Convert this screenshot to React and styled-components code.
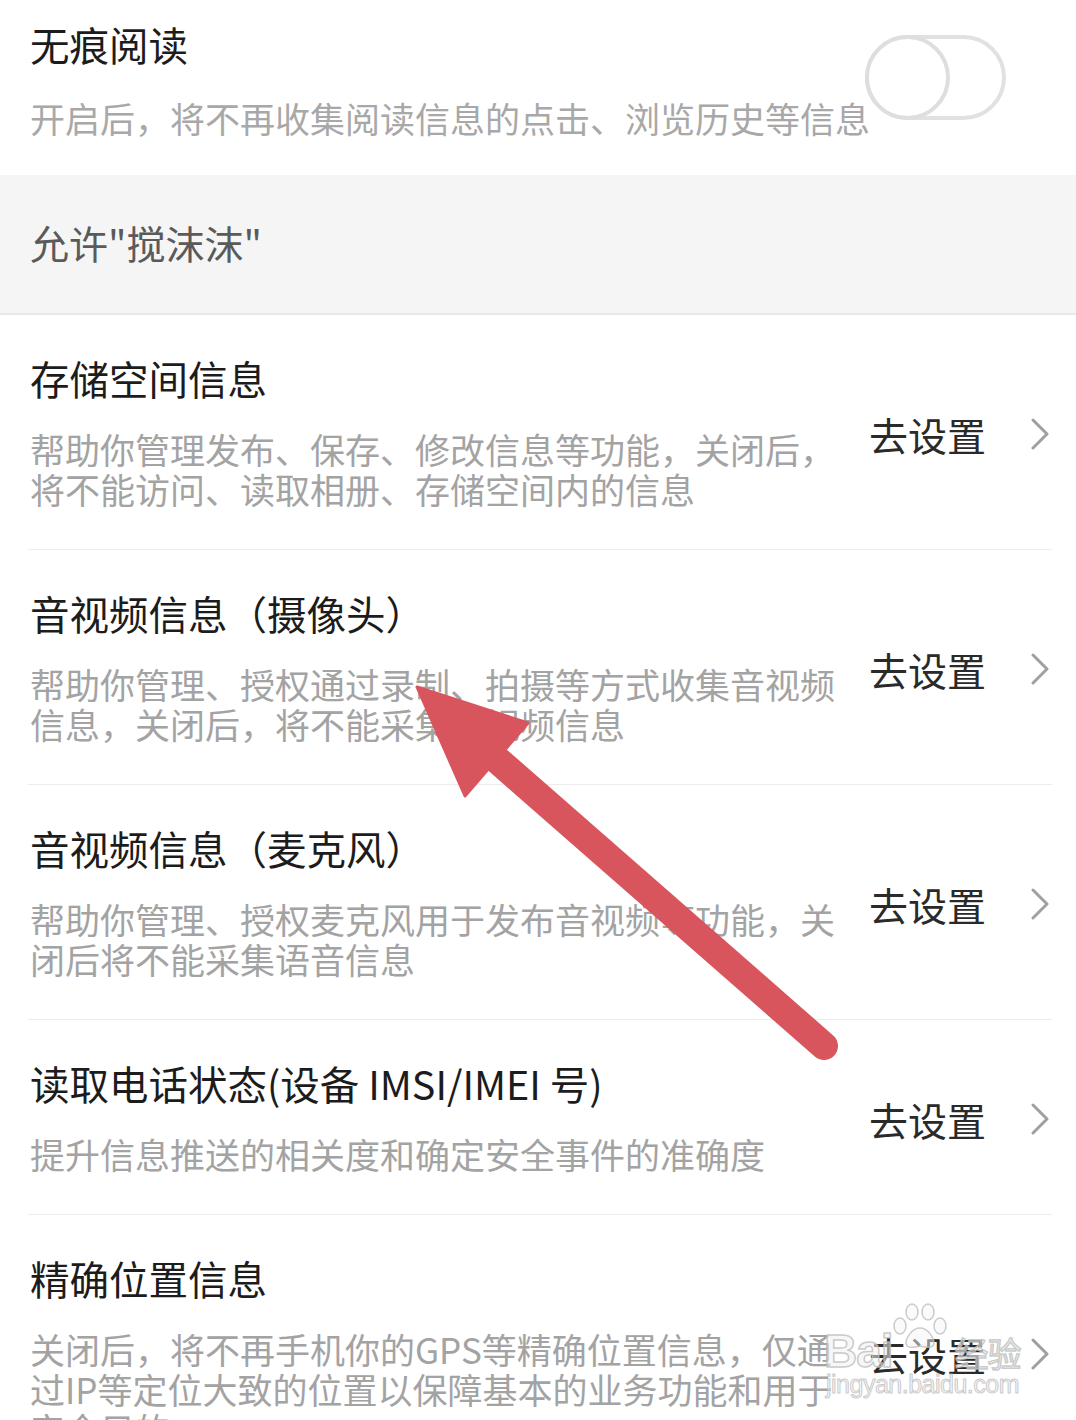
import React from "react";
import styled, { createGlobalStyle } from "styled-components";

const Global = createGlobalStyle`
  html, body { margin: 0; padding: 0; background: #fff; }
  body { font-family: "Noto Sans CJK SC", "Noto Sans", sans-serif; }
  * { box-sizing: border-box; }
`;

const Page = styled.div`
  position: relative;
  width: 1076px;
  height: 1420px;
  overflow: hidden;
  background: #fff;
`;

const Header = styled.div`
  display: flex;
  align-items: flex-start;
  height: 175px;
  padding: 20px 70px 0 30px;
`;

const HeaderText = styled.div`
  flex: 1;
  min-width: 0;
  display: flex;
  flex-direction: column;
  gap: 30px;
`;

const Title = styled.div`
  font-size: 39.5px;
  line-height: 48px;
  color: #1c1c1c;
  white-space: nowrap;
`;

const Desc = styled.div`
  font-size: 35px;
  line-height: 40px;
  color: ${(p) => p.$color || "#a3a3a3"};
  white-space: pre;
`;

const Toggle = styled.div`
  position: relative;
  flex: none;
  width: 141px;
  height: 85px;
  margin-top: 15px;
  margin-left: -10px;
  border: 4px solid #e1e1e1;
  border-radius: 43px;
  &::before {
    content: "";
    position: absolute;
    left: -4px;
    top: -4px;
    width: 85px;
    height: 85px;
    border: 4px solid #dedede;
    border-radius: 50%;
    background: #fff;
    box-sizing: border-box;
  }
`;

const Band = styled.div`
  display: flex;
  align-items: center;
  height: 140px;
  padding: 0 30px 4px;
  background: #f5f5f5;
  border-bottom: 2px solid #e8e8e8;
  font-size: 39px;
  color: #5a5a5a;
`;

const List = styled.div`
  padding: 0 24px 0 28px;
`;

const Row = styled.div`
  display: flex;
  align-items: center;
  padding: 39px 2px 40px 2px;
  border-bottom: 1px solid #ececec;
`;

const RowText = styled.div`
  flex: 1;
  min-width: 0;
  display: flex;
  flex-direction: column;
  gap: 27px;
`;

const Action = styled.div`
  flex: none;
  display: flex;
  align-items: center;
  gap: 44px;
  font-size: 39px;
  line-height: 48px;
  color: #2a2a2a;
  margin-top: 4px;
`;

const Chevron = () => (
  <svg width="20" height="32" viewBox="0 0 20 32">
    <path d="M3 2 L17 16 L3 30" fill="none" stroke="#a0a0a0" strokeWidth="3" strokeLinecap="round" strokeLinejoin="round" />
  </svg>
);

const Overlay = styled.svg`
  position: absolute;
  left: 0;
  top: 0;
  pointer-events: none;
`;

const Watermark = styled.div`
  position: absolute;
  left: 824px;
  top: 1300px;
  width: 200px;
  height: 104px;
  pointer-events: none;
  color: rgba(240, 240, 240, 0.55);
`;

const WmBig = styled.div`
  position: absolute;
  top: 28px;
  left: 0;
  display: flex;
  align-items: baseline;
  font-family: "Liberation Sans", Arial, sans-serif;
  font-size: 46px;
  font-weight: 700;
  line-height: 46px;
  -webkit-text-stroke: 1.5px rgba(190, 190, 190, 0.8);
  letter-spacing: -1px;
`;

const WmCn = styled.span`
  font-family: "Noto Sans CJK SC", sans-serif;
  font-size: 34px;
  margin-left: 62px;
  font-weight: 400;
`;

const WmUrl = styled.div`
  position: absolute;
  top: 70px;
  left: 2px;
  font-family: "Liberation Sans", Arial, sans-serif;
  font-size: 25px;
  line-height: 28px;
  -webkit-text-stroke: 1px rgba(190, 190, 190, 0.8);
  letter-spacing: -0.5px;
`;

const Paw = styled.svg`
  position: absolute;
  left: 66px;
  top: 2px;
`;

const rows = [
  {
    title: "存储空间信息",
    desc: "帮助你管理发布、保存、修改信息等功能，关闭后，\n将不能访问、读取相册、存储空间内的信息",
  },
  {
    title: "音视频信息（摄像头）",
    desc: "帮助你管理、授权通过录制、拍摄等方式收集音视频\n信息，关闭后，将不能采集音视频信息",
  },
  {
    title: "音视频信息（麦克风）",
    desc: "帮助你管理、授权麦克风用于发布音视频等功能，关\n闭后将不能采集语音信息",
  },
  {
    title: "读取电话状态(设备 IMSI/IMEI 号)",
    desc: "提升信息推送的相关度和确定安全事件的准确度",
  },
  {
    title: "精确位置信息",
    desc: "关闭后，将不再手机你的GPS等精确位置信息，仅通\n过IP等定位大致的位置以保障基本的业务功能和用于\n安全目的",
  },
];

export default function App() {
  return (
    <Page>
      <Global />
      <Header>
        <HeaderText>
          <Title>无痕阅读</Title>
          <Desc $color="#a8a8a8">开启后，将不再收集阅读信息的点击、浏览历史等信息</Desc>
        </HeaderText>
        <Toggle />
      </Header>
      <Band>允许"搅沫沫"</Band>
      <List>
        {rows.map((r) => (
          <Row key={r.title}>
            <RowText>
              <Title>{r.title}</Title>
              <Desc>{r.desc}</Desc>
            </RowText>
            <Action>
              去设置
              <Chevron />
            </Action>
          </Row>
        ))}
      </List>

      <Overlay width="1076" height="1420" viewBox="0 0 1076 1420">
        <line x1="486" y1="750" x2="824" y2="1046" stroke="#d9555d" strokeWidth="28" strokeLinecap="round" />
        <polygon points="417,687 465,796 528,723" fill="#d9555d" stroke="#d9555d" strokeWidth="3" strokeLinejoin="round" />
      </Overlay>

      <Watermark>
        <Paw width="60" height="48" viewBox="0 0 60 48">
          <g fill="rgba(245,245,245,0.5)" stroke="rgba(190,190,190,0.8)" strokeWidth="1.5">
            <ellipse cx="10" cy="24" rx="6" ry="8" />
            <ellipse cx="22" cy="10" rx="6" ry="8" />
            <ellipse cx="38" cy="10" rx="6" ry="8" />
            <ellipse cx="50" cy="24" rx="6" ry="8" />
            <path d="M30 26 C22 26 16 36 16 41 C16 46 22 46 30 44 C38 46 44 46 44 41 C44 36 38 26 30 26 Z" />
          </g>
        </Paw>
        <WmBig>
          Bai<WmCn>经验</WmCn>
        </WmBig>
        <WmUrl>jingyan.baidu.com</WmUrl>
      </Watermark>
    </Page>
  );
}
